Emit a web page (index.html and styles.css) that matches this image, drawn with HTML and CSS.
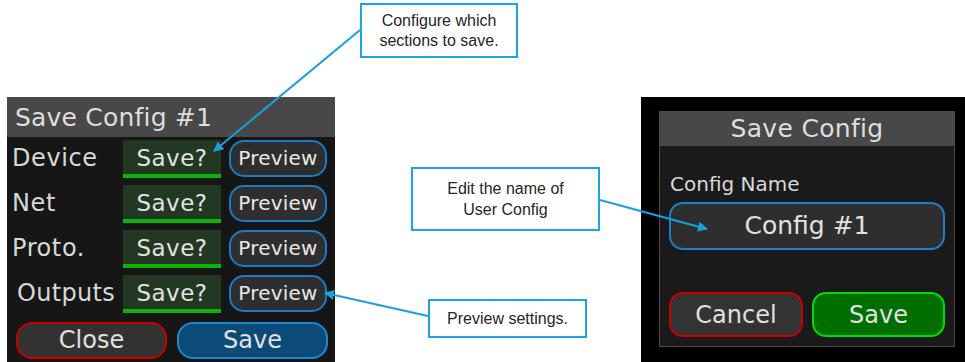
FILE: index.html
```html
<!DOCTYPE html>
<html>
<head>
<meta charset="utf-8">
<link rel="stylesheet" href="styles.css">
</head>
<body>
<div class="figure">
  <section class="panel-left">
    <div class="title">Save Config #1</div>
    <div class="body-left">
      <div class="row"><span class="label">Device</span><span class="savebox">Save?</span><span class="preview">Preview</span></div>
      <div class="row"><span class="label">Net</span><span class="savebox">Save?</span><span class="preview">Preview</span></div>
      <div class="row"><span class="label">Proto.</span><span class="savebox">Save?</span><span class="preview">Preview</span></div>
      <div class="row"><span class="label label-indent">Outputs</span><span class="savebox">Save?</span><span class="preview">Preview</span></div>
      <div class="actions">
        <span class="btn btn-close">Close</span>
        <span class="btn btn-save-blue">Save</span>
      </div>
    </div>
  </section>
  <section class="panel-right">
    <div class="dialog">
      <div class="dialog-title">Save Config</div>
      <div class="dialog-body">
        <div class="field-label">Config Name</div>
        <div class="input">Config #1</div>
        <div class="dialog-actions">
          <span class="dbtn dbtn-cancel">Cancel</span>
          <span class="dbtn dbtn-save">Save</span>
        </div>
      </div>
    </div>
  </section>

  <div class="callout callout-1">Configure which<br>sections to save.</div>
  <div class="callout callout-2">Edit the name of<br>User Config</div>
  <div class="callout callout-3">Preview settings.</div>

  <svg class="arrows" width="965" height="362" viewBox="0 0 965 362">
    <defs>
      <marker id="ah" viewBox="0 0 10 10" refX="9" refY="5" markerWidth="5" markerHeight="5" orient="auto">
        <path d="M0 0 L10 5 L0 10 z" fill="#1b9fe0"/>
      </marker>
    </defs>
    <line x1="360" y1="30" x2="214" y2="151" stroke="#1b9fe0" stroke-width="2" marker-end="url(#ah)"/>
    <line x1="600" y1="200" x2="707" y2="229" stroke="#1b9fe0" stroke-width="2" marker-end="url(#ah)"/>
    <line x1="428" y1="316" x2="325" y2="293" stroke="#1b9fe0" stroke-width="2" marker-end="url(#ah)"/>
  </svg>
</div>
</body>
</html>
```
FILE: styles.css
```css
* { box-sizing: border-box; }
html, body { margin: 0; padding: 0; }
body {
  background: #ffffff;
  width: 965px;
  height: 362px;
  overflow: hidden;
  font-family: "DejaVu Sans", sans-serif;
}
.figure {
  position: relative;
  width: 965px;
  height: 362px;
  display: flex;
  align-items: flex-start;
  padding: 97px 0 0 7px;
}

/* Left panel */
.panel-left {
  width: 328px;
  height: 265px;
  background: #161616;
  display: flex;
  flex-direction: column;
}
.title {
  height: 40px;
  background: #484848;
  color: #dedede;
  font-size: 25px;
  line-height: 41px;
  padding-left: 8px;
  letter-spacing: 0.2px;
}
.body-left {
  padding: 3px 7px 0 5px;
  display: flex;
  flex-direction: column;
  gap: 7px;
}
.row {
  display: flex;
  align-items: flex-start;
  height: 38px;
}
.label {
  width: 111px;
  color: #d8d8d8;
  font-size: 24px;
  line-height: 37px;
  letter-spacing: 0.6px;
  white-space: nowrap;
}
.label-indent { padding-left: 5px; letter-spacing: 0.3px; }
.savebox {
  width: 98px;
  height: 38px;
  background: #223822;
  border-bottom: 4px solid #0ab40a;
  color: #e2e2e2;
  font-size: 23px;
  line-height: 36px;
  text-align: center;
  letter-spacing: 0.5px;
}
.preview {
  margin-left: 8px;
  width: 98px;
  height: 37px;
  border: 2px solid #1a7cc4;
  border-radius: 15px;
  background: #2e2e2e;
  color: #e8e8e8;
  font-size: 20px;
  line-height: 32px;
  text-align: center;
  letter-spacing: 0.2px;
}
.actions {
  display: flex;
  gap: 10px;
  padding-left: 4px;
  margin-top: 2px;
}
.btn {
  width: 151px;
  height: 37px;
  border-radius: 16px;
  border: 2px solid;
  font-size: 24px;
  line-height: 33px;
  text-align: center;
  color: #e0e0e0;
}
.btn-close { background: #323232; border-color: #c80000; }
.btn-save-blue { background: #0c4a78; border-color: #1e88d0; }

/* Right panel */
.panel-right {
  margin-left: auto;
  width: 324px;
  height: 265px;
  background: #000000;
  padding: 14px 0 0 18px;
}
.dialog {
  width: 296px;
  height: 236px;
  background: #1a1a1a;
  border: 1px solid #4a4a4a;
  display: flex;
  flex-direction: column;
}
.dialog-title {
  height: 34px;
  background: #484848;
  color: #dedede;
  font-size: 25px;
  line-height: 34px;
  text-align: center;
  letter-spacing: 0.3px;
}
.dialog-body {
  padding: 26px 9px 0 9px;
  display: flex;
  flex-direction: column;
}
.field-label {
  color: #d8d8d8;
  font-size: 20px;
  line-height: 24px;
  padding-left: 1px;
}
.input {
  margin-top: 6px;
  height: 48px;
  border: 2px solid #1a80c8;
  border-radius: 14px;
  background: #2e2e2e;
  color: #e2e2e2;
  font-size: 25px;
  line-height: 43px;
  text-align: center;
}
.dialog-actions {
  margin-top: 42px;
  display: flex;
  gap: 9px;
}
.dbtn {
  width: 134px;
  height: 45px;
  border: 2px solid;
  border-radius: 14px;
  font-size: 24px;
  line-height: 42px;
  text-align: center;
  color: #e0e0e0;
}
.dbtn-cancel { background: #333333; border-color: #c80000; }
.dbtn-save { background: #006e00; border-color: #00dc00; width: 133px; }

/* Callouts (annotation overlay) */
.callout {
  position: absolute;
  background: #ffffff;
  border: 2px solid #1ca4e4;
  color: #262626;
  font-family: "Liberation Sans", Arial, sans-serif;
  font-size: 16px;
  line-height: 20px;
  text-align: center;
  display: flex;
  align-items: center;
  justify-content: center;
}
.callout-1 { left: 360px; top: 3px; width: 158px; height: 55px; }
.callout-2 { left: 411px; top: 167px; width: 189px; height: 64px; line-height: 21px; }
.callout-3 { left: 428px; top: 299px; width: 159px; height: 39px; }
.arrows {
  position: absolute;
  left: 0;
  top: 0;
  pointer-events: none;
}
```
